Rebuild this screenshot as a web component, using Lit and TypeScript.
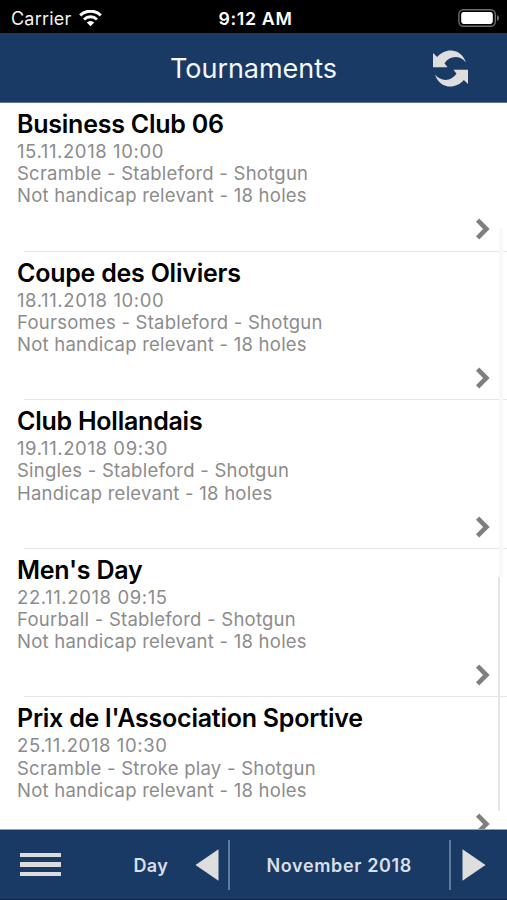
import { LitElement, html, css } from "lit";
import { customElement, property } from "lit/decorators.js";

interface Tournament {
  name: string;
  date: string;
  mode: string;
  info: string;
}

const TOURNAMENTS: Tournament[] = [
  { name: "Business Club 06", date: "15.11.2018 10:00", mode: "Scramble - Stableford - Shotgun", info: "Not handicap relevant - 18 holes" },
  { name: "Coupe des Oliviers", date: "18.11.2018 10:00", mode: "Foursomes - Stableford - Shotgun", info: "Not handicap relevant - 18 holes" },
  { name: "Club Hollandais", date: "19.11.2018 09:30", mode: "Singles - Stableford - Shotgun", info: "Handicap relevant - 18 holes" },
  { name: "Men's Day", date: "22.11.2018 09:15", mode: "Fourball - Stableford - Shotgun", info: "Not handicap relevant - 18 holes" },
  { name: "Prix de l'Association Sportive", date: "25.11.2018 10:30", mode: "Scramble - Stroke play - Shotgun", info: "Not handicap relevant - 18 holes" },
];

@customElement("status-bar")
export class StatusBar extends LitElement {
  static styles = css`
    :host {
      display: grid;
      grid-template-columns: 1fr auto 1fr;
      align-items: center;
      height: 33px;
      padding: 3px 7px 0 11px;
      box-sizing: border-box;
      background: #000;
      color: #f2f2f2;
      font-size: 18px;
    }
    .carrier { display: flex; align-items: center; gap: 8px; letter-spacing: 0.2px; }
    .clock { font-weight: 600; font-size: 17.8px; color: #fff; letter-spacing: 0.65px; }
    .battery { justify-self: end; display: flex; }
    svg { display: block; }
  `;
  render() {
    return html`
      <div class="carrier">
        <span>Carrier</span>
        <svg width="23" height="17" viewBox="0 0 23 17">
          <path d="M1.2 5.3 A14.8 14.8 0 0 1 21.8 5.3" fill="none" stroke="#fff" stroke-width="3" />
          <path d="M5 9.4 A9.3 9.3 0 0 1 18 9.4" fill="none" stroke="#fff" stroke-width="2.8" />
          <path d="M11.5 16.2 L7.8 12.4 A5.3 5.3 0 0 1 15.2 12.4Z" fill="#fff" />
        </svg>
      </div>
      <div class="clock">9:12 AM</div>
      <div class="battery">
        <svg width="42" height="19" viewBox="0 0 42 19">
          <rect x="0.9" y="0.7" width="36.4" height="16.6" rx="4.6" fill="none" stroke="#6d6d6d" stroke-width="1.4" />
          <rect x="3.2" y="3" width="31.6" height="12" rx="2.4" fill="#fff" />
          <path d="M39 5.9 Q41.2 6.9 41.2 9 T39 12.1Z" fill="#6d6d6d" />
        </svg>
      </div>
    `;
  }
}

@customElement("tournament-row")
export class TournamentRow extends LitElement {
  @property({ attribute: false }) item!: Tournament;

  static styles = css`
    :host {
      display: flex;
      flex-direction: column;
      flex: none;
      height: 148.6px;
      box-sizing: border-box;
      padding: 6px 16px 0 17px;
      white-space: nowrap;
    }
    .name {
      height: 31px;
      line-height: 31px;
      font-size: 25px;
      font-weight: 600;
      color: #000;
      letter-spacing: -0.24px;
    }
    .meta {
      line-height: 22.15px;
      font-size: 18.5px;
      color: #8c8c8c;
      letter-spacing: 0.24px;
    }
    .date { letter-spacing: 0.6px; }
    .more { align-self: flex-end; margin-top: 12px; display: block; }
    .rule { flex: none; height: 1px; margin: auto -16px 0 7px; background: #e6e6e6; }
  `;
  render() {
    const t = this.item;
    return html`
      <div class="name">${t.name}</div>
      <div class="meta date">${t.date}</div>
      <div class="meta">${t.mode}</div>
      <div class="meta">${t.info}</div>
      <svg class="more" width="16" height="22" viewBox="0 0 16 22">
        <path d="M2.6 2.2 L11.4 11 L2.6 19.8" fill="none" stroke="#7f7f7f" stroke-width="4.6" />
      </svg>
      <div class="rule"></div>
    `;
  }
}

@customElement("app-root")
export class AppRoot extends LitElement {
  static styles = css`
    :host {
      display: flex;
      flex-direction: column;
      width: 507px;
      height: 900px;
      overflow: hidden;
      background: #fff;
      font-family: Inter, "Liberation Sans", sans-serif;
    }
    svg { display: block; }
    .header {
      display: grid;
      grid-template-columns: 1fr auto 1fr;
      align-items: center;
      height: 70px;
      flex: none;
      box-sizing: border-box;
      border-bottom: 1px solid #5d7796;
      background: #1a3a66;
    }
    .title {
      grid-column: 2;
      color: #f4f7fb;
      font-size: 27px;
      line-height: 34px;
      padding-top: 2px;
      letter-spacing: -0.05px;
    }
    .refresh { justify-self: end; margin-right: 38px; }
    .list {
      position: relative;
      flex: 1;
      min-height: 0;
      overflow: hidden;
      display: flex;
      flex-direction: column;
    }
    .track, .thumb { position: absolute; }
    .track { top: 125px; right: 4px; width: 4px; height: 349px; background: #f8f8f8; }
    .thumb { top: 474px; right: 7px; width: 2px; height: 234px; background: #e6e6e6; }
    .footer {
      display: flex;
      align-items: center;
      height: 71px;
      flex: none;
      box-sizing: border-box;
      border-top: 1px solid #8d9db4;
      border-bottom: 1px solid #0b2347;
      background: #1a3a66;
      color: #d9dfe7;
      font-size: 18px;
      font-weight: 600;
    }
    .menu { display: flex; flex-direction: column; gap: 5px; width: 41.5px; margin-left: 19.5px; }
    .bar { height: 4.4px; background: #dcdcdc; }
    .day { margin-left: 72.5px; width: 61px; letter-spacing: 0.3px; }
    .prev { flex: none; }
    .split { width: 2px; height: 50px; background: #5f7c9c; }
    .prev + .split { margin-left: 9px; }
    .month { flex: 1; text-align: center; letter-spacing: 0.65px; }
    .day, .month { padding-top: 1px; }
    .next { margin: 0 21px 0 11px; flex: none; }
  `;
  render() {
    return html`
      <status-bar></status-bar>
      <div class="header">
        <div class="title">Tournaments</div>
        <svg class="refresh" width="37" height="38" viewBox="432 49 37 38" fill="#dedede">
          <path d="M433 53 L437.2 57 C445 47.5 461 47.5 466 62.5 C459.5 54.5 449.5 56 444.5 63.2 L447.5 67.3 L433 67.3Z" />
          <path d="M468 84 L463.8 80 C456 89.5 440 89.5 435 74.5 C441.5 82.5 451.5 81 456.5 73.8 L453.5 69.7 L468 69.7Z" />
        </svg>
      </div>
      <div class="list">
        ${TOURNAMENTS.map((t) => html`<tournament-row .item=${t}></tournament-row>`)}
        <div class="track"></div>
        <div class="thumb"></div>
      </div>
      <div class="footer">
        <div class="menu">
          <div class="bar"></div>
          <div class="bar"></div>
          <div class="bar"></div>
        </div>
        <div class="day">Day</div>
        <svg class="prev" width="24" height="32" viewBox="0 0 24 32"><path d="M0.5 16 L23.5 0.3 V31.7Z" fill="#dedede" /></svg>
        <div class="split"></div>
        <div class="month">November 2018</div>
        <div class="split"></div>
        <svg class="next" width="24" height="32" viewBox="0 0 24 32"><path d="M23.5 16 L0.5 0.3 V31.7Z" fill="#dedede" /></svg>
      </div>
    `;
  }
}
